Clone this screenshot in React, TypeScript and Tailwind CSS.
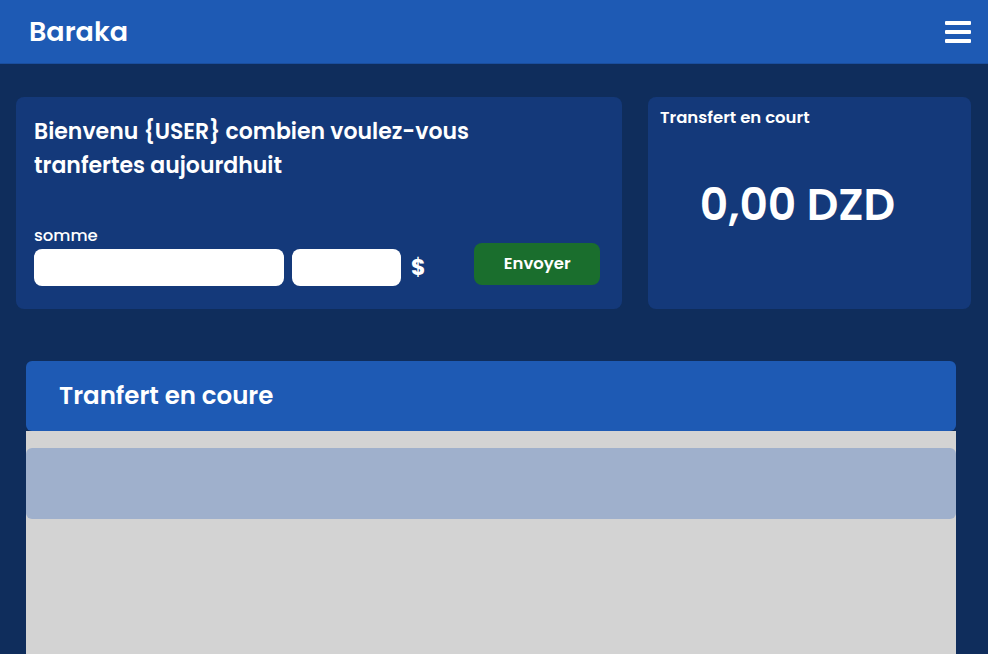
import { useState } from 'react';

const font = { fontFamily: "Poppins, 'Open Sans', 'Noto Sans', sans-serif" };

const Header = () => {
	return (
		<div className="flex h-[65px] items-center justify-between bg-[#1e5ab4] pl-[29px] pr-[17px] border-b border-[#1a4e9e]">
			<a href="/" className="text-[27px] font-semibold text-white leading-none">
				Baraka
			</a>
			<button className="flex flex-col gap-[5px] w-[26px]">
				<span className="block h-[4px] w-full bg-white rounded-[1px]" />
				<span className="block h-[4px] w-full bg-white rounded-[1px]" />
				<span className="block h-[4px] w-full bg-white rounded-[1px]" />
			</button>
		</div>
	);
};

const SendCard = () => {
	const [amount, setAmount] = useState('');
	const [cents, setCents] = useState('');

	return (
		<div className="w-[606px] rounded-lg bg-[#14397a] pl-[18px] pr-[22px] pt-[18px] pb-[23px]">
			<h2 className="text-[22px] font-semibold leading-[34px] text-white">
				Bienvenu {'{USER}'} combien voulez-vous
				<br />
				tranfertes aujourdhuit
			</h2>
			<div className="mt-[43px] flex items-end">
				<div className="flex flex-col">
					<label className="text-[16.5px] font-medium leading-[20px] text-white">somme</label>
					<div className="mt-[3px] flex items-center gap-2">
						<input
							value={amount}
							onChange={(e) => setAmount(e.target.value)}
							className="h-[37px] w-[250px] rounded-lg bg-white px-3 outline-none"
						/>
						<input
							value={cents}
							onChange={(e) => setCents(e.target.value)}
							className="h-[37px] w-[109px] rounded-lg bg-white px-3 outline-none"
						/>
						<span className="ml-[2px] text-[22px] font-bold text-white">$</span>
					</div>
				</div>
				<button className="mb-[1px] ml-[49px] h-[42px] w-[126px] rounded-lg bg-[#1a6e2d] text-[16.5px] font-semibold text-white">
					Envoyer
				</button>
			</div>
		</div>
	);
};

const BalanceCard = () => {
	return (
		<div className="flex flex-1 flex-col rounded-lg bg-[#14397a] px-3 pt-[9px]">
			<p className="text-[16.5px] font-semibold leading-[24px] text-white">Transfert en court</p>
			<p className="mt-[53px] text-center text-[44px] font-semibold leading-none text-white pr-[24px]">
				0,00 DZD
			</p>
		</div>
	);
};

const TransferList = () => {
	return (
		<div className="ml-[26px] mr-[32px] mt-[52px] flex flex-1 flex-col">
			<div className="flex h-[70px] items-center rounded-md bg-[#1e5ab4] pl-[33px]">
				<h3 className="text-[24.5px] font-semibold text-white">Tranfert en coure</h3>
			</div>
			<div className="flex-1 bg-[#d3d3d3] pt-[17px] min-h-[223px]">
				<div className="h-[71px] rounded-md bg-[#9fb0cc]" />
			</div>
		</div>
	);
};

export default function App() {
	return (
		<div className="flex h-[654px] flex-col overflow-hidden bg-[#0f2d5c]" style={font}>
			<Header />
			<div className="mt-[33px] flex gap-[26px] pl-4 pr-[17px]">
				<SendCard />
				<BalanceCard />
			</div>
			<TransferList />
		</div>
	);
}
